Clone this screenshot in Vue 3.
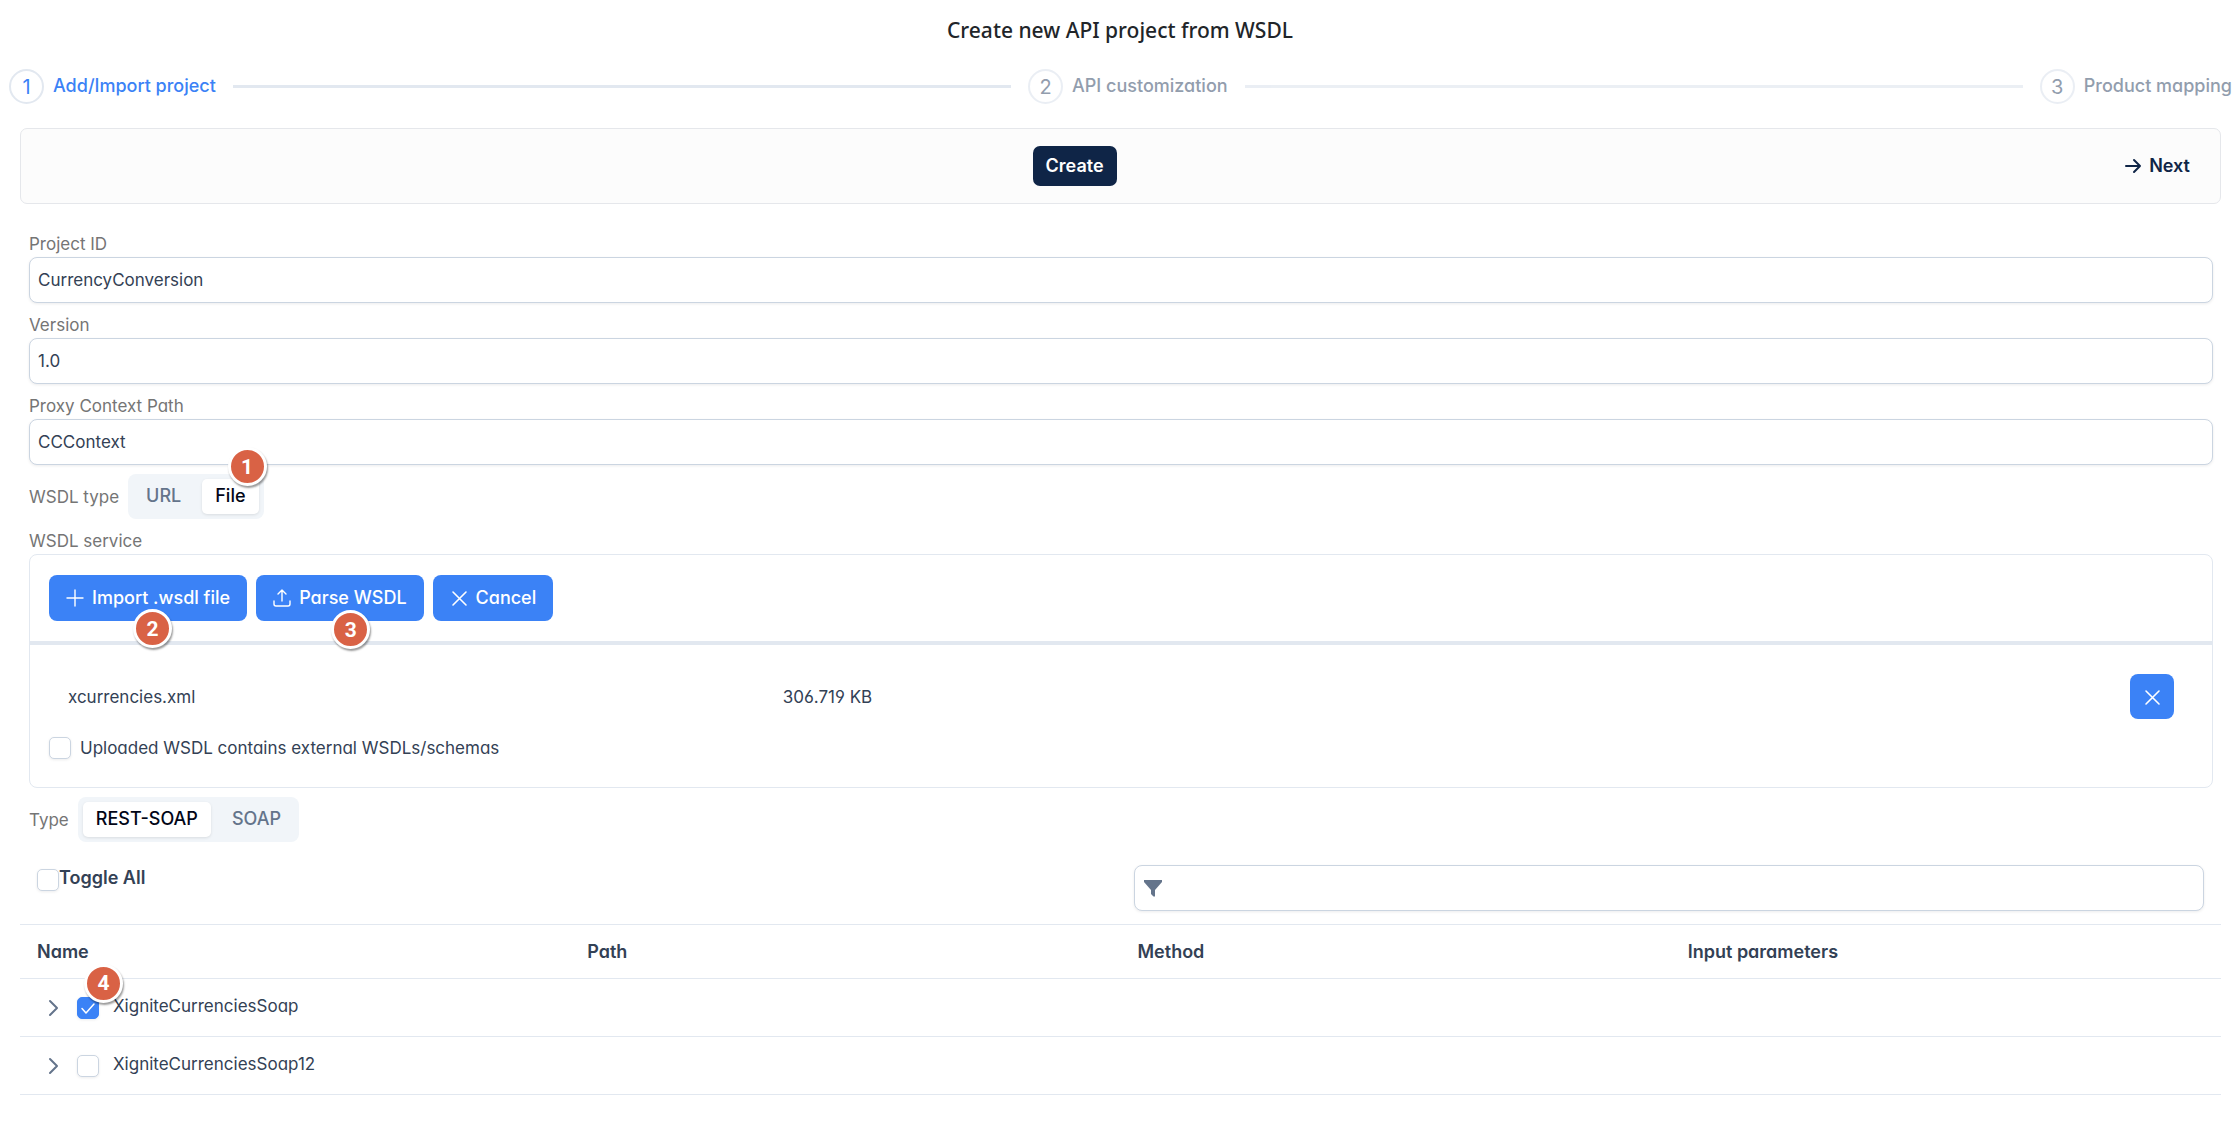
<script setup>
import { ref } from 'vue'

const steps = ['Add/Import project', 'API customization', 'Product mapping']
const fields = ref([
  { id: 'project-id', label: 'Project ID', value: 'CurrencyConversion' },
  { id: 'version', label: 'Version', value: '1.0' },
  { id: 'context-path', label: 'Proxy Context Path', value: 'CCContext' },
])
const wsdlType = ref('File')
const serviceType = ref('REST-SOAP')
const external = ref(false)
const toggleAll = ref(false)
const filter = ref('')
const columns = ['Name', 'Path', 'Method', 'Input parameters']
const rows = ref([
  { name: 'XigniteCurrenciesSoap', checked: true, marker: 4 },
  { name: 'XigniteCurrenciesSoap12', checked: false },
])
</script>

<template>
  <main class="page">
    <h1 class="title">Create new API project from WSDL</h1>

    <ol class="stepper">
      <li v-for="(step, i) in steps" :key="step" class="step" :class="{ active: i === 0 }">
        <span class="step-number">{{ i + 1 }}</span>
        <span class="step-label">{{ step }}</span>
        <span v-if="i < steps.length - 1" class="step-line"></span>
      </li>
    </ol>

    <div class="content">
      <div class="toolbar">
        <span></span>
        <button type="button" class="action create">Create</button>
        <button type="button" class="action">
          <svg width="18" height="18" viewBox="0 0 18 18" fill="none" stroke="currentColor" stroke-width="2" stroke-linecap="round" stroke-linejoin="round"><path d="M2 9H16M10 3L16 9L10 15" /></svg>
          Next
        </button>
      </div>

      <form class="form" @submit.prevent>
        <div v-for="field in fields" :key="field.id" class="field">
          <label class="label" :for="field.id">{{ field.label }}</label>
          <input :id="field.id" v-model="field.value" type="text" class="text-input" />
        </div>

        <div class="toggle-row">
          <span id="wsdl-type" class="label">WSDL type</span>
          <div class="segments" role="group" aria-labelledby="wsdl-type">
            <button type="button" class="segment" :class="{ selected: wsdlType === 'URL' }" @click="wsdlType = 'URL'">URL</button>
            <button type="button" class="segment" :class="{ selected: wsdlType === 'File' }" @click="wsdlType = 'File'">File</button>
            <span class="marker marker-file">1</span>
          </div>
        </div>

        <div class="field">
          <span class="label">WSDL service</span>
          <section class="upload">
            <div class="upload-actions">
              <div class="anchor">
                <button type="button" class="primary">
                  <svg width="18" height="18" viewBox="0 0 18 18" fill="none" stroke="currentColor" stroke-width="1.4" stroke-linecap="round"><path d="M9 1V17M1 9H17" /></svg>
                  Import .wsdl file
                </button>
                <span class="marker marker-import">2</span>
              </div>
              <div class="anchor">
                <button type="button" class="primary">
                  <svg width="18" height="18" viewBox="0 0 18 18" fill="none" stroke="currentColor" stroke-width="1.4" stroke-linecap="round" stroke-linejoin="round"><path d="M9 12V1M5 5L9 1L13 5M1 12V15Q1 17 3 17H15Q17 17 17 15V12" /></svg>
                  Parse WSDL
                </button>
                <span class="marker marker-parse">3</span>
              </div>
              <button type="button" class="primary">
                <svg width="18" height="18" viewBox="0 0 18 18" fill="none" stroke="currentColor" stroke-width="1.6" stroke-linecap="round"><path d="M3 3L16 16M16 3L3 16" /></svg>
                Cancel
              </button>
            </div>
            <div class="upload-bar"></div>
            <div class="upload-body">
              <div class="file">
                <span class="file-cell">xcurrencies.xml</span>
                <span class="file-cell">306.719 KB</span>
                <span class="file-cell file-remove">
                  <button type="button" class="primary icon-only" aria-label="Remove file">
                    <svg width="18" height="18" viewBox="0 0 18 18" fill="none" stroke="currentColor" stroke-width="1.6" stroke-linecap="round"><path d="M3 3L16 16M16 3L3 16" /></svg>
                  </button>
                </span>
              </div>
              <div class="option">
                <input id="external" v-model="external" type="checkbox" class="check" />
                <label for="external">Uploaded WSDL contains external WSDLs/schemas</label>
              </div>
            </div>
          </section>
        </div>

        <div class="toggle-row">
          <span id="service-type" class="label">Type</span>
          <div class="segments" role="group" aria-labelledby="service-type">
            <button v-for="type in ['REST-SOAP', 'SOAP']" :key="type" type="button" class="segment" :class="{ selected: serviceType === type }" @click="serviceType = type">{{ type }}</button>
          </div>
        </div>
      </form>

      <div class="table-tools">
        <div class="toggle-all">
          <input id="toggle-all" v-model="toggleAll" type="checkbox" class="check" />
          <label for="toggle-all">Toggle All</label>
        </div>
        <div class="filter">
          <svg width="20" height="18" viewBox="0 0 20 18" fill="currentColor"><path d="M1 1H19V3L12 11V17.500H10.500L8 15V11L1 3Z" /></svg>
          <input v-model="filter" type="text" class="filter-input" aria-label="Filter" />
        </div>
      </div>

      <table class="table">
        <thead>
          <tr>
            <th v-for="column in columns" :key="column" scope="col">{{ column }}</th>
          </tr>
        </thead>
        <tbody>
          <tr v-for="(row, i) in rows" :key="row.name">
            <td>
              <div class="row-name">
                <button type="button" class="expand" aria-label="Expand row">
                  <svg width="18" height="18" viewBox="0 0 18 18" fill="none" stroke="currentColor" stroke-width="2" stroke-linecap="round" stroke-linejoin="round"><path d="M6 2L13 9L6 16" /></svg>
                </button>
                <span class="check-box">
                  <input :id="'row-' + i" v-model="row.checked" type="checkbox" class="check" />
                  <svg v-if="row.checked" class="tick" width="18" height="18" viewBox="0 0 18 18" fill="none" stroke="#fff" stroke-width="1.5" stroke-linecap="round" stroke-linejoin="round"><path d="M3 9.500L7 14L15 5" /></svg>
                  <span v-if="row.marker" class="marker marker-row">{{ row.marker }}</span>
                </span>
                <label :for="'row-' + i">{{ row.name }}</label>
              </div>
            </td>
            <td></td>
            <td></td>
            <td></td>
          </tr>
        </tbody>
      </table>
    </div>
  </main>
</template>

<style>
body {
  margin: 0;
  background: #fff;
}
</style>

<style scoped>
.page {
  box-sizing: border-box;
  font-family: Inter, "Liberation Sans", sans-serif;
  font-feature-settings: "cv02", "cv03", "cv04", "cv11";
  font-size: 17px;
  line-height: 26px;
  color: #334155;
}
.page * {
  box-sizing: border-box;
}
button,
input {
  font: inherit;
  font-feature-settings: inherit;
  color: inherit;
  margin: 0;
}
button {
  border: 0;
  padding: 0;
  background: none;
  cursor: pointer;
}
svg {
  display: block;
  flex: none;
}
.title {
  margin: 0;
  padding-top: 15px;
  font-family: "Noto Sans", "Open Sans", sans-serif;
  font-size: 21px;
  line-height: 30px;
  font-weight: 500;
  color: #212529;
  text-align: center;
}
.stepper {
  display: flex;
  gap: 17px;
  margin: 24px 8px 24px 9px;
  padding: 0;
  list-style: none;
}
.step {
  display: flex;
  align-items: center;
  gap: 9px;
  color: #64748b;
  opacity: 0.7;
}
.step:not(:last-child) {
  flex: 1 1 auto;
}
.step.active {
  color: #3b82f6;
  opacity: 1;
}
.step-number {
  display: flex;
  align-items: center;
  justify-content: center;
  width: 35px;
  height: 35px;
  border: 2px solid #e2e8f0;
  border-radius: 50%;
  font-size: 20px;
}
.step-label {
  padding-bottom: 2px;
  font-size: 18px;
  font-weight: 500;
}
.step-line {
  flex: 1;
  height: 3px;
  margin-left: 8px;
  background: #e2e8f0;
}
.content {
  padding: 0 19px 0 20px;
}
.toolbar {
  display: flex;
  align-items: center;
  justify-content: space-between;
  height: 76px;
  padding: 0 17px;
  background: #fcfcfc;
  border: 1px solid #e5e7eb;
  border-radius: 7px;
}
.action {
  display: flex;
  align-items: center;
  gap: 7px;
  height: 40px;
  padding: 0 13px;
  border-radius: 7px;
  color: #0f2547;
  font-size: 18px;
  font-weight: 600;
  font-feature-settings: normal;
}
.create {
  background: #0f2547;
  color: #fff;
}
.form {
  display: flex;
  flex-direction: column;
  gap: 9px;
  padding: 27px 8px 0 9px;
}
.field {
  display: flex;
  flex-direction: column;
}
.label {
  color: #757575;
}
.text-input,
.filter {
  height: 46px;
  padding: 0 8px;
  background: #fff;
  border: 1px solid #cbd5e1;
  border-radius: 8px;
  box-shadow: 0 1px 3px rgba(18, 18, 23, 0.08);
}
.toggle-row {
  display: flex;
  align-items: center;
  gap: 9px;
}
.segments {
  position: relative;
  display: flex;
  gap: 8px;
  height: 45px;
  padding: 5px;
  background: #f1f5f9;
  border-radius: 8px;
}
.segment {
  height: 35px;
  padding: 0 13px 2px;
  border-radius: 5px;
  font-size: 18px;
  font-weight: 500;
  color: #64748b;
}
.segment.selected {
  background: #fff;
  color: #020617;
  box-shadow: 0 1px 3px rgba(0, 0, 0, 0.1);
}
.upload {
  border: 1px solid #e2e8f0;
  border-radius: 8px;
}
.upload-actions {
  display: flex;
  gap: 9px;
  padding: 20px 19px;
}
.anchor {
  position: relative;
}
.primary {
  display: flex;
  align-items: center;
  justify-content: center;
  gap: 8px;
  height: 46px;
  padding: 0 17px;
  border-radius: 8px;
  background: #3b82f6;
  color: #fff;
  font-size: 18px;
  font-weight: 500;
}
.icon-only {
  width: 44px;
  height: 45px;
  padding: 0;
}
.upload-bar {
  height: 4px;
  background: #e2e8f0;
}
.upload-body {
  padding: 20px 19px 28px;
}
.file {
  display: grid;
  grid-template-columns: repeat(3, 1fr);
  align-items: center;
}
.file-cell {
  padding: 9px 19px;
}
.file-remove {
  justify-self: end;
}
.option {
  display: flex;
  align-items: center;
  gap: 9px;
  height: 22px;
  margin-top: 9px;
}
.check {
  display: block;
  flex: none;
  appearance: none;
  width: 22px;
  height: 22px;
  border: 1px solid #cbd5e1;
  border-radius: 5px;
  background: #fff;
  box-shadow: 0 1px 3px rgba(18, 18, 23, 0.08);
}
.check:checked {
  border-color: #3b82f6;
  background: #3b82f6;
}
.table-tools {
  display: flex;
  justify-content: space-between;
  padding: 23px 17px 13px;
}
.toggle-all {
  display: flex;
  font-size: 18px;
  font-weight: 600;
}
.toggle-all .check {
  margin-top: 4px;
}
.filter {
  display: flex;
  align-items: center;
  gap: 9px;
  flex: 0 0 auto;
  width: calc(50% - 13px);
  color: #64748b;
}
.filter-input {
  flex: 1;
  min-width: 0;
  padding: 0;
  border: 0;
  outline: 0;
  background: none;
}
.table {
  width: 100%;
  table-layout: fixed;
  border-collapse: collapse;
  border-top: 1px solid #e2e8f0;
}
.table th,
.table td {
  padding: 0 17px;
  border-bottom: 1px solid #e2e8f0;
  text-align: left;
}
.table th {
  height: 54px;
  font-size: 18px;
  font-weight: 600;
}
.table td {
  height: 58px;
}
.row-name {
  display: flex;
  align-items: center;
}
.row-name label {
  padding-bottom: 3px;
}
.expand {
  display: grid;
  place-items: center;
  width: 31px;
  height: 31px;
  margin-right: 9px;
  color: #64748b;
}
.check-box {
  position: relative;
  margin-right: 14px;
}
.tick {
  position: absolute;
  top: 2px;
  left: 2px;
  pointer-events: none;
}
.marker {
  position: absolute;
  z-index: 1;
  display: flex;
  align-items: center;
  justify-content: center;
  width: 39px;
  height: 39px;
  border: 3px solid #fff;
  border-radius: 50%;
  background: #d96245;
  box-shadow: 1px 2px 2px rgba(0, 0, 0, 0.4);
  color: #fff;
  font-family: Roboto, sans-serif;
  font-size: 21px;
  font-weight: 700;
}
.marker-file {
  top: -27px;
  right: -3px;
}
.marker-import {
  top: 34px;
  left: 84px;
}
.marker-parse {
  top: 35px;
  left: 75px;
}
.marker-row {
  top: -33px;
  left: 7px;
}
</style>
